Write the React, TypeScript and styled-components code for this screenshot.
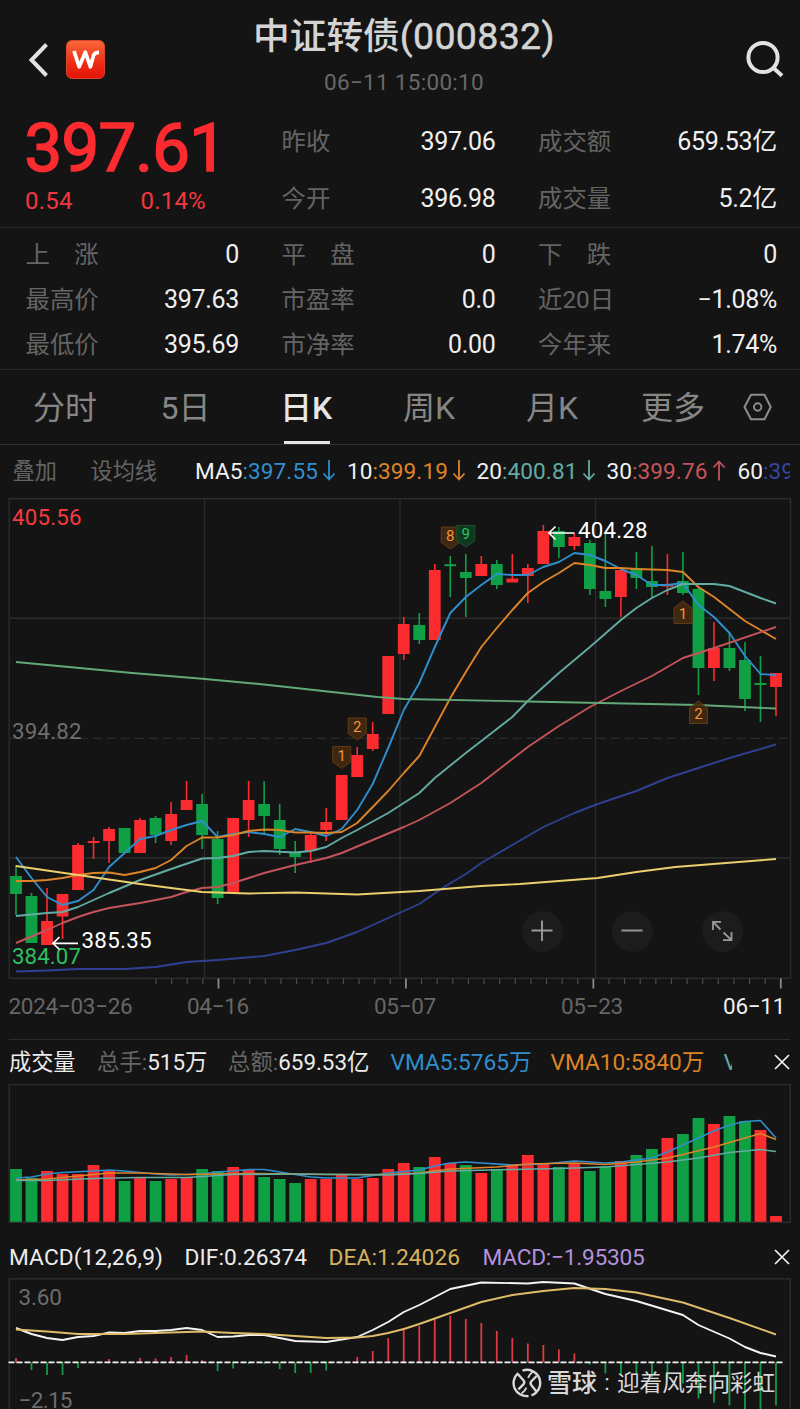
import React from "react";
import styled, { createGlobalStyle, css } from "styled-components";

const RED = "#fb2b30";
const GREEN = "#0fa046";
const BLUE = "#2f8fcd";
const ORANGE = "#dc8427";
const TEAL = "#62aca3";
const PINK = "#c4545b";
const NAVY = "#2f4192";
const YELLOW = "#ecd06e";
const LINE = "#2b2b2b";

const GlobalStyle = createGlobalStyle`
  * { box-sizing: border-box; }
  body {
    margin: 0;
    background: #141414;
    font-family: Roboto, "Noto Sans CJK SC", sans-serif;
    line-height: 1.2;
    color: #eeeeee;
  }
`;

const Page = styled.main`
  width: 800px;
  height: 1409px;
  overflow: hidden;
  background: #141414;
  display: flex;
  flex-direction: column;
  white-space: nowrap;
`;

/* ---------- header ---------- */

const Header = styled.header`
  height: 113px;
  flex: none;
  display: grid;
  grid-template-columns: 117px 1fr 109px;
`;

const HeaderLeft = styled.div`
  display: flex;
  align-items: flex-start;
  padding: 40px 0 0 26px;
  gap: 14px;
`;

const Logo = styled.div`
  width: 39px;
  height: 39px;
  border-radius: 6px;
  background: linear-gradient(#f8673a, #ef2a16 60%, #e31608);
  border: 1px solid #d8452a;
  display: grid;
  place-items: center;
`;

const HeaderCenter = styled.div`
  display: flex;
  flex-direction: column;
  align-items: center;
  padding-top: 11px;
`;

const Title = styled.h1`
  margin: 0;
  font-size: 36.7px;
  font-weight: 500;
  line-height: 50px;
  color: #d4d4d4;
  span {
    font-size: 37.5px;
    font-weight: 400;
    letter-spacing: 0.35px;
    -webkit-text-stroke: 0.5px #d4d4d4;
  }
`;

const Timestamp = styled.div`
  font-size: 22.5px;
  line-height: 30px;
  margin-top: 5px;
  letter-spacing: 0.3px;
  color: #686868;
`;

const HeaderRight = styled.div`
  padding: 38px 0 0 54px;
`;

/* ---------- quote ---------- */

const Quote = styled.section`
  height: 115px;
  flex: none;
  border-bottom: 1px solid ${LINE};
  display: grid;
  grid-template-columns: 213.5px 214px 239px;
  column-gap: 42.5px;
  padding-left: 25.5px;
`;

const PriceBlock = styled.div`
  display: flex;
  flex-direction: column;
  color: ${RED};
`;

const Price = styled.div`
  font-size: 67px;
  font-weight: 400;
  line-height: 70px;
  letter-spacing: -0.7px;
  margin-left: -1px;
  -webkit-text-stroke: 1.7px ${RED};
`;

const Change = styled.div`
  display: grid;
  grid-template-columns: 115.5px auto;
  margin: 2px 0 0 -0.5px;
  font-size: 24px;
  line-height: 32px;
  letter-spacing: 0.2px;
  color: #f4373f;
`;

const Column = styled.div`
  display: flex;
  flex-direction: column;
`;

const Cell = styled.div<{ $h: number }>`
  height: ${(p) => p.$h}px;
  display: flex;
  align-items: center;
  justify-content: space-between;
`;

const Label = styled.span`
  font-size: 24.4px;
  line-height: 30px;
  color: #646464;
  white-space: pre;
`;

const Value = styled.span`
  font-size: 25px;
  line-height: 30px;
  letter-spacing: -0.3px;
  color: #f0f0f0;
`;

const Stats = styled.section`
  height: 142px;
  flex: none;
  padding: 4px 0 0 25.5px;
  border-bottom: 1px solid ${LINE};
  display: grid;
  grid-template-columns: 213.5px 214px 239px;
  grid-auto-rows: 45.2px;
  column-gap: 42.5px;
`;

/* ---------- tabs ---------- */

const Tabs = styled.nav`
  height: 75px;
  flex: none;
  border-bottom: 1px solid #303030;
  display: grid;
  grid-template-columns: 127.5px 119.5px 123px 123px 115px 101.5px auto;
  padding-left: 33px;
`;

const Tab = styled.div<{ $active?: boolean }>`
  height: 74px;
  display: flex;
  flex-direction: column;
  font-size: 32px;
  line-height: 76px;
  color: #868686;
  ${(p) =>
    p.$active &&
    css`
      color: #e6e6e6;
      font-weight: 500;
      &::after {
        content: "";
        height: 3px;
        width: 46px;
        flex: none;
        margin: -5px 0 0 4px;
        background: #e8e4e6;
      }
    `}
`;

const TabIcon = styled.div`
  padding-top: 23px;
`;

/* ---------- moving average legend ---------- */

const Legend = styled.div`
  height: 53px;
  flex: none;
  width: 790px;
  overflow: hidden;
  display: grid;
  grid-template-columns: 78px 104.5px 152px 129.5px 130px 131px auto;
  padding-left: 12.5px;
  align-items: center;
  font-size: 22.6px;
`;

const LegendButton = styled.span`
  font-size: 22.2px;
  color: #646464;
`;

const LegendItem = styled.span<{ $color: string }>`
  display: flex;
  align-items: center;
  color: #f0f0f0;
  b {
    font-weight: 400;
    letter-spacing: 0.1px;
    color: ${(p) => p.$color};
  }
  svg {
    margin-left: 4px;
  }
`;

/* ---------- charts ---------- */

const ChartArea = styled.section`
  position: relative;
  height: 492px;
  flex: none;
`;

const Plot = styled.svg`
  display: block;
  font-family: Roboto, sans-serif;
`;

const ZoomControls = styled.div`
  position: absolute;
  left: 521.5px;
  top: 412.5px;
  display: flex;
  gap: 49px;
`;

const RoundButton = styled.button`
  width: 41px;
  height: 41px;
  padding: 0;
  border: 0;
  border-radius: 50%;
  background: #1c1c1c;
  display: grid;
  place-items: center;
`;

const Dates = styled.div`
  height: 50px;
  flex: none;
  margin: 0 10px 0 8.5px;
  border-bottom: 1px solid ${LINE};
  display: grid;
  grid-template-columns: 178.5px 187px 187px 1fr auto;
  font-size: 22.5px;
  line-height: 32px;
  letter-spacing: -0.3px;
  color: #666666;
`;

const Today = styled.span`
  color: #f0f0f0;
  padding-right: 5px;
`;

const IndicatorBar = styled.div<{ $h: number; $cols: string; $top?: number }>`
  height: ${(p) => p.$h}px;
  flex: none;
  padding: ${(p) => p.$top || 0}px 0 0 9px;
  display: grid;
  grid-template-columns: ${(p) => p.$cols};
  align-items: center;
  font-size: 22.7px;
`;

const Ink = styled.span<{ $color?: string; $track?: number; $size?: number; $clip?: number }>`
  padding-top: 1px;
  color: ${(p) => p.$color || "#ececec"};
  letter-spacing: ${(p) => p.$track || 0}px;
  ${(p) => p.$size && `font-size: ${p.$size}px;`}
  ${(p) =>
    p.$clip &&
    css`
      width: ${p.$clip}px;
      overflow: hidden;
    `}
  i {
    font-style: normal;
    color: #666666;
  }
`;

const Watermark = styled.div`
  position: absolute;
  left: 512px;
  top: 90px;
  display: flex;
  align-items: center;
  height: 32px;
  font-size: 22.6px;
  color: #d8d8d8;
  svg { margin-right: 5px; }
  strong {
    font-weight: 500;
    font-size: 25px;
    padding-top: 1px;
  }
  em {
    font-style: normal;
    width: 20px;
    text-align: center;
  }
  span { padding-top: 2px; }
`;

const MacdArea = styled.section`
  position: relative;
  height: 132px;
  flex: none;
`;

/* ---------- data ---------- */

const px = (i: number) => 16 + 15.51 * i;

// [high, body top, body bottom, low, rising]
const candles: [number, number, number, number, 0 | 1][] = [
  [865, 876, 894, 915, 0], [893, 896, 943, 943, 0], [888, 921, 945, 945, 1],
  [894, 894, 916.5, 939, 1], [843, 845, 890, 890, 1], [837, 841, 843, 859, 1],
  [827, 829, 841, 863, 1], [828, 828, 853, 853, 0], [818, 820, 853, 853, 1],
  [816, 818, 835, 843, 0], [802, 814, 841, 845, 1], [781, 800, 810, 810, 1],
  [794, 804, 835, 849, 0], [831, 839, 898, 904, 0], [818, 818, 893, 893, 1],
  [781, 800, 820, 837, 1], [781, 804, 816, 833, 0], [804, 820, 849, 855, 0],
  [841, 853, 857, 873, 0], [833, 835, 851, 863, 1], [808, 822, 830, 841, 1],
  [775, 775, 820, 820, 1], [747, 755, 777, 777, 1], [722, 734, 749, 751, 1],
  [656, 656, 714, 714, 1], [617, 624, 654, 660, 1], [613, 625, 640, 644, 0],
  [564, 570, 640, 640, 1], [556, 564.2, 566.2, 597, 0], [554, 572, 578, 617, 0],
  [556, 564, 576, 576, 1], [560, 564, 585, 589, 0], [554, 578.5, 582.5, 582, 1],
  [564, 568, 576, 603, 1], [525, 531, 564, 564, 1], [527, 531, 547, 558, 0],
  [533, 537, 546, 550, 1], [540, 543, 589, 595, 0], [533, 591, 599, 607, 0],
  [568, 570, 597, 617, 1], [552, 568, 578, 589, 0], [546, 581, 587, 597, 0],
  [554, 585, 586.5, 595, 1], [552, 581, 593, 595, 0], [587, 589, 668, 695, 0],
  [622, 648, 668, 681, 1], [632, 648, 668, 671, 0], [642, 660, 699, 711, 0],
  [656, 683, 685, 722, 0], [673, 673, 687, 716, 1],
];

const ma5 = [
  857, 878, 897, 905, 901, 890, 867, 853, 839, 836, 830, 825, 821, 837, 834, 832, 834, 837, 829,
  832, 836, 829, 810, 784, 748, 710, 683, 647, 613, 597, 585, 574, 575, 575, 567, 562, 553, 555,
  561, 569, 575, 585, 585, 583, 605, 617, 633, 656, 674, 675,
];
const ma10 = [
  881, 881, 880, 878, 875, 873, 872.5, 875, 872, 868, 860, 846, 837.5, 837.5, 835, 831, 829.5,
  830, 832.5, 832.5, 833, 832, 823, 807, 791, 773, 756, 727, 698, 672, 647, 628, 610, 593, 582,
  573, 563, 565, 568, 568, 569, 569.5, 570, 572, 587, 597, 609, 621, 630, 639,
];

type Pt = [number, number];
const ma20: Pt[] = [
  [0, 916], [2, 913], [3, 912], [4, 907], [6, 893], [8, 880], [10, 869], [12, 858.5], [13, 858],
  [14, 856], [15, 852], [16, 851], [18, 852.5], [19, 851], [20, 847], [21, 838], [22, 830],
  [24, 813], [26, 793], [27, 778], [29, 753], [31, 729], [32, 717], [33, 701], [34, 687],
  [35, 673], [37, 647], [39, 620], [40, 608], [41, 598], [42, 590], [43, 584], [45, 584],
  [46, 586], [48, 598], [49, 603.5],
];
const ma30: Pt[] = [
  [0, 943], [2, 930], [3, 923], [4, 917], [5, 912], [6, 908], [8, 903], [10, 897], [11, 892],
  [12, 888], [13, 887], [14, 883], [15, 878], [16, 873], [18, 865], [20, 858], [21, 853],
  [23, 840], [25, 827], [26, 820], [28, 803], [30, 783], [32, 759], [33, 747], [35, 726],
  [37, 707], [39, 691], [41, 676], [42, 667], [43, 658], [45, 648], [49, 627],
];
const ma60: Pt[] = [
  [0, 971.5], [2, 970.5], [4, 969], [7, 969], [9, 967], [11, 962], [13, 960], [16, 956],
  [18, 950], [20, 943], [22, 932], [24, 918], [26, 904], [27.5, 888], [29, 874], [30, 863],
  [33, 836], [34, 827], [36, 813], [37.5, 804], [40, 791], [42, 778], [44, 768], [46, 758],
  [49, 744.5],
];
const ma120: Pt[] = [
  [0, 866], [4, 875], [8, 884], [12, 892], [15, 893.5], [18, 892.5], [22, 894.5], [26, 891],
  [30, 886], [32.5, 884], [37.5, 878], [40, 872], [42.5, 867], [49, 859],
];
const ma250: Pt[] = [
  [0, 662], [7.5, 673], [12.2, 679], [16, 684.5], [23.3, 697], [25, 699], [33, 701.5],
  [44, 705], [49, 708.5],
];

const volTop = [
  1169, 1178, 1171, 1174, 1174, 1165, 1171, 1181, 1178, 1181, 1179, 1178, 1169, 1171, 1167, 1170,
  1177, 1179, 1183, 1179, 1179, 1175, 1179, 1178, 1169, 1163, 1167, 1157, 1163, 1165, 1173, 1169,
  1165, 1155, 1164, 1167, 1164, 1171, 1166, 1161, 1155, 1149, 1138, 1134, 1118, 1124, 1116, 1121,
  1130, 1216,
];
const volRising = (i: number) => i === 28 || i === 48 || candles[i][4] === 1;

const vma5: Pt[] = [
  [0, 1178], [1, 1177], [2, 1174], [3, 1172.5], [5, 1171], [6, 1170], [7, 1171], [9, 1174],
  [10, 1175], [12, 1174], [13, 1172], [14, 1171], [15, 1169.5], [16, 1169.5], [17, 1172],
  [19, 1177], [20, 1178], [22, 1178], [24, 1173], [26, 1170], [27, 1166], [28, 1163],
  [29, 1162], [30, 1163], [32, 1165], [34, 1164], [36, 1161], [38, 1163], [39, 1162],
  [41, 1158], [42, 1152], [43, 1145], [44, 1138], [45, 1131], [46, 1125], [47, 1121.5],
  [48, 1120.5], [49, 1138],
];
const vma10: Pt[] = [
  [0, 1180], [2, 1179], [4, 1176], [6, 1173], [8, 1173], [11, 1174.5], [15, 1173.5],
  [20, 1174.5], [24, 1174.5], [26, 1173], [28, 1169], [31, 1167], [33, 1164], [36, 1163],
  [38, 1164.5], [40, 1162], [42, 1158], [43, 1154.5], [45, 1147], [47, 1138], [48, 1133.5],
  [49, 1139.5],
];
const vma20: Pt[] = [
  [0, 1180.5], [2, 1180.5], [5, 1178.5], [8, 1177.5], [11, 1177.5], [14, 1174.5], [18, 1174],
  [24, 1175], [26, 1173.5], [28, 1171], [32, 1169.5], [35, 1168.5], [38, 1167], [40, 1164.5],
  [42, 1162], [44, 1158], [46, 1152.5], [48, 1149.5], [49, 1151.5],
];

const dif: Pt[] = [
  [0, 1328], [1, 1334], [2, 1338], [3, 1340], [4, 1337], [5, 1336], [6, 1332.5], [7, 1333],
  [8, 1331], [9, 1331], [10, 1330], [11, 1328], [12, 1330], [13, 1337], [14, 1336.5],
  [15, 1335], [16, 1335], [17, 1338], [18, 1341], [20, 1342], [22, 1337], [23, 1330],
  [24, 1322], [25, 1312], [26, 1305], [27, 1297], [28, 1289], [30, 1282.5], [33, 1283.5],
  [34, 1282], [36, 1283.5], [38, 1294], [40, 1301], [43, 1315], [44, 1325], [46, 1338.5],
  [47, 1347], [48, 1353], [49, 1356.5],
];
const dea: Pt[] = [
  [0, 1329.5], [2, 1331.5], [4, 1334], [7, 1334], [9, 1333], [12, 1331.5], [14, 1333],
  [16, 1334], [18, 1336], [20, 1338], [22, 1337.5], [23, 1336], [24, 1333], [25, 1329],
  [26, 1324], [28, 1313], [30, 1302], [32, 1295], [34, 1291], [36, 1288], [38, 1289],
  [40, 1292.5], [43, 1302.5], [46, 1318], [49, 1334.5],
];
const hist: Pt[] = [
  [0, 1358], [1, 1370], [2, 1375], [3, 1375], [4, 1368], [6, 1359], [8, 1358], [9, 1358.5],
  [10, 1357], [11, 1355], [12, 1360], [13, 1371], [14, 1368.5], [15, 1364], [16, 1364],
  [17, 1369], [18, 1373], [19, 1373], [20, 1370.5], [22, 1357], [23, 1351], [24, 1338],
  [25, 1328.5], [26, 1326], [27, 1318.5], [28, 1315.5], [29, 1319], [30, 1323], [31, 1331],
  [32, 1338], [33, 1343.5], [34, 1345], [35, 1349.5], [36, 1353.5], [37, 1364.5],
  [38, 1373.5], [39, 1374.5], [40, 1375], [41, 1377], [42, 1378.5], [43, 1383.5],
  [44, 1398.5], [45, 1402.5], [46, 1405.5], [47, 1409], [48, 1409], [49, 1405.5],
];

const toPoints = (pts: Pt[]) => pts.map(([i, y]) => `${px(i).toFixed(1)},${y}`).join(" ");
const indexed = (ys: number[]): Pt[] => ys.map((y, i) => [i, y]);

const Curve = ({ pts, color, w = 1.9 }: { pts: Pt[]; color: string; w?: number }) => (
  <polyline points={toPoints(pts)} fill="none" stroke={color} strokeWidth={w} strokeLinejoin="round" />
);

const Marker = ({ i, y, up, green, n }: { i: number; y: number; up?: boolean; green?: boolean; n: string }) => {
  const x = px(i);
  const d = up
    ? `M${x - 9} ${y + 22.5}V${y + 7}L${x} ${y}L${x + 9} ${y + 7}V${y + 22.5}Z`
    : `M${x - 9} ${y}H${x + 9}V${y + 15.5}L${x} ${y + 22}L${x - 9} ${y + 15.5}Z`;
  return (
    <g>
      <path
        d={d}
        fill={green ? "#0d3d1f" : "#45290f"}
        fillOpacity={0.9}
        stroke={green ? "#1b5230" : "#5f3c17"}
        strokeWidth={1}
      />
      <text x={x} y={y + (up ? 18 : 14)} fontSize={15} textAnchor="middle" fill={green ? "#2fc267" : "#f0953a"}>
        {n}
      </text>
    </g>
  );
};

const Arrow = ({ up, color }: { up?: boolean; color: string }) => (
  <svg width="14" height="22" viewBox="0 0 14 22" fill="none" stroke={color} strokeWidth="1.8">
    <path d={up ? "M7 20.5V1.5M1.5 7.5L7 1.5L12.5 7.5" : "M7 0V19.5M1.5 13.5L7 19.5L12.5 13.5"} />
  </svg>
);

const CloseIcon = () => (
  <svg width="16" height="16" viewBox="0 0 16 16" stroke="#f2f2f2" strokeWidth="1.7">
    <path d="M1 1L15 15M15 1L1 15" />
  </svg>
);

const PriceChart = () => (
  <Plot width="800" height="492" viewBox="0 498 800 492">
    <g stroke={LINE} strokeWidth="1.4" fill="none">
      <rect x="9.2" y="498.7" width="781.3" height="479.6" />
      <path d="M9 618.2H790M9 858H790M204.5 499V978M400 499V978M595.5 499V978" />
      <path d="M9 738.4H790" strokeDasharray="9 5" />
    </g>
    {Array.from({ length: 41 }, (_, k) => (
      <path
        key={k}
        d={`M${156 + 15.62 * k} 978.5V${k % 12 === 4 ? 988.5 : 984}`}
        stroke={k % 12 === 4 ? "#8a8a8a" : "#4c4c4c"}
        strokeWidth={k % 12 === 4 ? 1.8 : 1.2}
      />
    ))}
    {candles.map(([hi, top, bottom, lo, rising], i) => (
      <g key={i} fill={rising ? RED : GREEN}>
        <rect x={px(i) - 0.8} y={hi} width="1.6" height={lo - hi} />
        <rect x={px(i) - 5.9} y={top} width="11.8" height={bottom - top} />
      </g>
    ))}
    <Curve pts={indexed(ma5)} color={BLUE} />
    <Curve pts={indexed(ma10)} color={ORANGE} />
    <Curve pts={ma20} color={TEAL} />
    <Curve pts={ma30} color={PINK} />
    <Curve pts={ma60} color={NAVY} />
    <Curve pts={ma120} color={YELLOW} />
    <Curve pts={ma250} color="#63a878" />
    <Marker i={21} y={746.5} n="1" />
    <Marker i={22} y={718} n="2" />
    <Marker i={28} y={527} n="8" />
    <Marker i={29} y={525.3} n="9" green />
    <Marker i={43} y={601} n="1" up />
    <Marker i={44} y={701} n="2" up />
    <g fontSize="22.3">
      <text x="12" y="525" textLength="69.5" fill="#f53b40">405.56</text>
      <text x="12" y="739" textLength="69.5" fill="#6e6e6e">394.82</text>
      <text x="12" y="963.7" textLength="69" fill="#2cc062">384.07</text>
      <text x="578" y="537.8" textLength="69.5" fill="#ffffff">404.28</text>
      <text x="81.5" y="948.2" textLength="70" fill="#ffffff">385.35</text>
    </g>
    <g fill="none" stroke="#ffffff" strokeWidth="1.7">
      <path d="M574.5 533H549M555.5 526.5L549 533L555.5 539.5" />
      <path d="M78 943.3H53M59.5 937L53 943.3L59.5 949.5" />
    </g>
  </Plot>
);

const VolumeChart = () => (
  <Plot width="800" height="140" viewBox="0 1084 800 140">
    <rect x="9.2" y="1084.5" width="781" height="137.8" fill="none" stroke={LINE} strokeWidth="1.5" />
    {volTop.map((top, i) => (
      <rect key={i} x={px(i) - 5.9} y={top} width="11.8" height={1221.8 - top} fill={volRising(i) ? RED : GREEN} />
    ))}
    <Curve pts={vma5} color={BLUE} w={1.6} />
    <Curve pts={vma10} color={ORANGE} w={1.6} />
    <Curve pts={vma20} color={TEAL} w={1.6} />
  </Plot>
);

const MacdChart = () => (
  <Plot width="800" height="132" viewBox="0 1277 800 132">
    <rect x="9.2" y="1278.8" width="781" height="160" fill="none" stroke={LINE} strokeWidth="1.5" />
    {hist.map(([i, y]) => (
      <path key={i} d={`M${px(i)} 1362.4V${y}`} stroke={y < 1362 ? "#dd3a44" : "#129a4b"} strokeWidth="1.8" />
    ))}
    <path d="M8.5 1362.4H784" stroke="#f4f4f4" strokeWidth="1.9" strokeDasharray="6 2" />
    <Curve pts={dif} color="#f4f4f4" />
    <Curve pts={dea} color="#dfbc69" />
    <g fontSize="22.5" fill="#6c6c6c">
      <text x="18.5" y="1305" textLength="43.5">3.60</text>
      <text x="18.5" y="1407.5" textLength="54">−2.15</text>
    </g>
  </Plot>
);

const stats: [string, string][] = [
  ["上　涨", "0"], ["平　盘", "0"], ["下　跌", "0"],
  ["最高价", "397.63"], ["市盈率", "0.0"], ["近20日", "−1.08%"],
  ["最低价", "395.69"], ["市净率", "0.00"], ["今年来", "1.74%"],
];

const averages = [
  { name: "MA5", value: ":397.55", color: BLUE, arrow: "down" },
  { name: "10", value: ":399.19", color: ORANGE, arrow: "down" },
  { name: "20", value: ":400.81", color: TEAL, arrow: "down" },
  { name: "30", value: ":399.76", color: PINK, arrow: "up" },
  { name: "60", value: ":39", color: "#34479f" },
];

export default function App() {
  return (
    <Page>
      <GlobalStyle />
      <Header>
        <HeaderLeft>
          <svg width="26" height="40" viewBox="0 0 26 40" fill="none" stroke="#e2e2e2" strokeWidth="4">
            <path d="M20.5 4.5L5.5 20L20.5 35.5" />
          </svg>
          <Logo>
            <svg width="28" height="20" viewBox="0 0 28 20" fill="none" stroke="#fff" strokeWidth="3.7" strokeLinejoin="round">
              <path d="M2 1L7.2 16.8L13.3 2.2L18.4 16.8L21.6 5.2Q22.8 2.4 27 2.4" />
            </svg>
          </Logo>
        </HeaderLeft>
        <HeaderCenter>
          <Title>
            中证转债<span>(000832)</span>
          </Title>
          <Timestamp>06−11 15:00:10</Timestamp>
        </HeaderCenter>
        <HeaderRight>
          <svg width="44" height="44" viewBox="0 0 44 44" fill="none" stroke="#e2e2e2" strokeWidth="4">
            <circle cx="18" cy="19.5" r="14.6" />
            <path d="M28.5 30L37 37.8" />
          </svg>
        </HeaderRight>
      </Header>

      <Quote>
        <PriceBlock>
          <Price>397.61</Price>
          <Change>
            <span>0.54</span>
            <span>0.14%</span>
          </Change>
        </PriceBlock>
        <Column>
          <Cell $h={57}><Label>昨收</Label><Value>397.06</Value></Cell>
          <Cell $h={57}><Label>今开</Label><Value>396.98</Value></Cell>
        </Column>
        <Column>
          <Cell $h={57}><Label>成交额</Label><Value>659.53亿</Value></Cell>
          <Cell $h={57}><Label>成交量</Label><Value>5.2亿</Value></Cell>
        </Column>
      </Quote>

      <Stats>
        {stats.map(([label, value]) => (
          <Cell key={label} $h={45.2}>
            <Label>{label}</Label>
            <Value>{value}</Value>
          </Cell>
        ))}
      </Stats>

      <Tabs>
        <Tab>分时</Tab>
        <Tab>5日</Tab>
        <Tab $active>日K</Tab>
        <Tab>周K</Tab>
        <Tab>月K</Tab>
        <Tab>更多</Tab>
        <TabIcon>
          <svg width="30" height="28" viewBox="0 0 30 28" fill="none" stroke="#8c8c8c" strokeWidth="2">
            <path d="M8 1.8H21.5L27.7 14L21.5 26.2H8L1.5 14Z" strokeLinejoin="round" />
            <circle cx="14.7" cy="14" r="3.7" />
          </svg>
        </TabIcon>
      </Tabs>

      <Legend>
        <LegendButton>叠加</LegendButton>
        <LegendButton>设均线</LegendButton>
        {averages.map((a) => (
          <LegendItem key={a.name} $color={a.color}>
            {a.name}
            <b>{a.value}</b>
            {a.arrow && <Arrow up={a.arrow === "up"} color={a.color} />}
          </LegendItem>
        ))}
      </Legend>

      <ChartArea>
        <PriceChart />
        <ZoomControls>
          <RoundButton aria-label="zoom in">
            <svg width="22" height="22" viewBox="0 0 22 22" stroke="#9a9a9a" strokeWidth="1.9">
              <path d="M0.5 10.5H21.5M11 0.5V21" />
            </svg>
          </RoundButton>
          <RoundButton aria-label="zoom out">
            <svg width="22" height="22" viewBox="0 0 22 22" stroke="#9a9a9a" strokeWidth="1.9">
              <path d="M0.5 10.5H21.5" />
            </svg>
          </RoundButton>
          <RoundButton aria-label="full screen">
            <svg width="22" height="22" viewBox="0 0 22 22" fill="none" stroke="#9a9a9a" strokeWidth="1.8">
              <path d="M2 10V1.8H10M2 1.8L9.5 9.5M20.5 12V20.2H12M20.5 20.2L12.5 12.5" />
            </svg>
          </RoundButton>
        </ZoomControls>
      </ChartArea>

      <Dates>
        <span>2024−03−26</span>
        <span>04−16</span>
        <span>05−07</span>
        <span>05−23</span>
        <Today>06−11</Today>
      </Dates>

      <IndicatorBar $h={44} $cols="88px 131px 162.5px 160px 173px 50px auto">
        <Ink $size={22.2}>成交量</Ink>
        <Ink $size={22.4}><i>总手:</i>515万</Ink>
        <Ink $size={22.4}><i>总额:</i>659.53亿</Ink>
        <Ink $color={BLUE}>VMA5:5765万</Ink>
        <Ink $color={ORANGE}>VMA10:5840万</Ink>
        <Ink $color={TEAL} $clip={8}>V</Ink>
        <CloseIcon />
      </IndicatorBar>
      <VolumeChart />

      <IndicatorBar $h={53} $top={13} $cols="175.5px 144px 154px 291px auto">
        <Ink $track={0.1}>MACD(12,26,9)</Ink>
        <Ink $track={0.1}>DIF:0.26374</Ink>
        <Ink $color="#d6b25f" $track={0.1}>DEA:1.24026</Ink>
        <Ink $color="#b391dd" $track={-0.25}>MACD:−1.95305</Ink>
        <CloseIcon />
      </IndicatorBar>
      <MacdArea>
        <MacdChart />
        <Watermark>
          <svg width="30" height="30" viewBox="0 0 30 30" fill="none" stroke="#d8d8d8" strokeWidth="2.4">
            <path d="M10.5 2.6A13 13 0 0 1 19.5 27.4M16.5 28A13 13 0 0 1 6.2 5.2" />
            <path d="M5.8 6L11.4 12.2Q13.2 14.3 11.4 16.4L6.4 21.4M24.6 8L19.6 13Q17.6 15 19.4 17.2L24.4 23.4" />
            <path d="M20.6 4Q17 6.5 16 10M9.6 25.4Q13 23.2 14.4 19.6" strokeWidth="1.8" />
          </svg>
          <strong>雪球</strong>
          <em>:</em>
          <span>迎着风奔向彩虹</span>
        </Watermark>
      </MacdArea>
    </Page>
  );
}
